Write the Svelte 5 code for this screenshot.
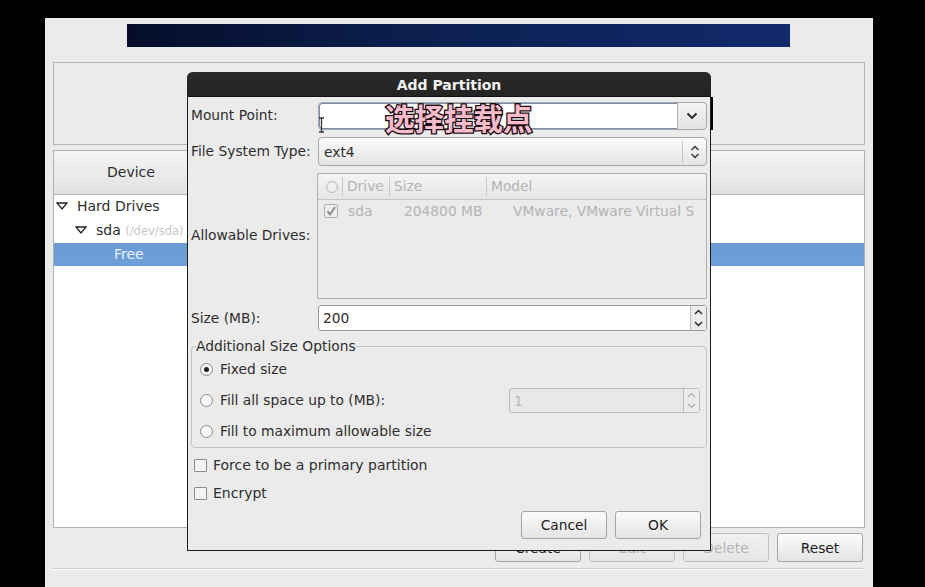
<script>
  const mainButtons = [
    { label: 'Create', disabled: false },
    { label: 'Edit', disabled: true },
    { label: 'Delete', disabled: true },
    { label: 'Reset', disabled: false }
  ];
  const sizeOptions = [
    { label: 'Fixed size', checked: true },
    { label: 'Fill all space up to (MB):', checked: false, spin: true },
    { label: 'Fill to maximum allowable size', checked: false }
  ];
</script>

<div class="screen">
  <div class="window">
    <div class="banner"></div>
    <div class="graph-panel"></div>

    <div class="tree-panel">
      <div class="tree-head"><span class="head-device">Device</span></div>
      <div class="tree-row level-0">
        <svg class="expander" width="12" height="8" viewBox="0 0 12 8"><path d="M1 1h10L6 7z" fill="#fff" stroke="#222" stroke-width="1.3"/></svg>
        <span>Hard Drives</span>
      </div>
      <div class="tree-row level-1">
        <svg class="expander" width="12" height="8" viewBox="0 0 12 8"><path d="M1 1h10L6 7z" fill="#fff" stroke="#222" stroke-width="1.3"/></svg>
        <span>sda <small>(/dev/sda)</small></span>
      </div>
      <div class="tree-row selected"><span>Free</span></div>
    </div>

    <div class="main-buttons">
      {#each mainButtons as b}
        <button class="btn" class:off={b.disabled}>{b.label}</button>
      {/each}
    </div>
    <div class="separator"></div>
  </div>

  <div class="dialog">
    <div class="titlebar">Add Partition</div>
    <div class="body">
      <div class="row mount">
        <span class="label">Mount Point:</span>
        <div class="combo-entry">
          <div class="entry-part"></div>
          <div class="arrow-part">
            <svg width="12" height="8" viewBox="0 0 12 8"><path d="M1.5 1.5 6 6l4.500-4.500" fill="none" stroke="#222" stroke-width="1.800"/></svg>
          </div>
        </div>
      </div>

      <div class="row fstype">
        <span class="label">File System Type:</span>
        <div class="combo">
          <span>ext4</span>
          <div class="updown">
            <svg width="10" height="14" viewBox="0 0 10 14"><path d="M1.500 5 5 1.500 8.500 5M1.500 9 5 12.500 8.500 9" fill="none" stroke="#333" stroke-width="1.400"/></svg>
          </div>
        </div>
      </div>

      <div class="row drives">
        <span class="label">Allowable Drives:</span>
        <div class="drive-list">
          <div class="drive-head">
            <span class="col-radio"><i></i></span>
            <span class="col-drive">Drive</span>
            <span class="col-size">Size</span>
            <span class="col-model">Model</span>
          </div>
          <div class="drive-row">
            <span class="drive-check">
              <svg width="12" height="12" viewBox="0 0 12 12"><path d="M2.500 6 5 9.500 10 2" fill="none" stroke="#888" stroke-width="1.800"/></svg>
            </span>
            <span class="cell-name">sda</span>
            <span class="cell-size">204800 MB</span>
            <span class="cell-model">VMware, VMware Virtual S</span>
          </div>
        </div>
      </div>

      <div class="row size">
        <span class="label size-label">Size (MB):</span>
        <div class="spin">
          <span class="spin-value">200</span>
          <div class="spin-btns">
            <svg width="9" height="6" viewBox="0 0 9 6"><path d="M1 5 4.500 1.500 8 5" fill="none" stroke="#222" stroke-width="1.400"/></svg>
            <svg width="9" height="6" viewBox="0 0 9 6"><path d="M1 1 4.500 4.500 8 1" fill="none" stroke="#222" stroke-width="1.400"/></svg>
          </div>
        </div>
      </div>

      <fieldset class="frame">
        <legend>Additional Size Options</legend>
        {#each sizeOptions as opt}
          <div class="option">
            <span class="radio" class:on={opt.checked}></span>
            <span class="option-text">{opt.label}</span>
            {#if opt.spin}
              <div class="spin small">
                <span class="spin-value">1</span>
                <div class="spin-btns">
                  <svg width="9" height="6" viewBox="0 0 9 6"><path d="M1 5 4.500 1.500 8 5" fill="none" stroke="#aaa" stroke-width="1.200"/></svg>
                  <svg width="9" height="6" viewBox="0 0 9 6"><path d="M1 1 4.500 4.500 8 1" fill="none" stroke="#aaa" stroke-width="1.200"/></svg>
                </div>
              </div>
            {/if}
          </div>
        {/each}
      </fieldset>

      <label class="check first"><span class="box"></span>Force to be a primary partition</label>
      <label class="check"><span class="box"></span>Encrypt</label>

      <div class="dialog-buttons">
        <button class="btn">Cancel</button>
        <button class="btn">OK</button>
      </div>
    </div>

    <div class="caption">选择挂载点</div>
    <svg class="ibeam" width="7" height="16" viewBox="0 0 7 16"><path d="M1 1h5M3.500 1v14M1 15h5" fill="none" stroke="#333" stroke-width="1.300"/></svg>
    <div class="dialog-shadow"></div>
  </div>
</div>

<style>
  :global(body) {
    margin: 0;
    background: #000;
  }

  .screen {
    position: relative;
    width: 925px;
    height: 587px;
    overflow: hidden;
    background: #000;
    font-family: "DejaVu Sans", sans-serif;
    font-size: 13.8px;
    color: #2e2e2e;
  }

  .window {
    box-sizing: border-box;
    width: 828px;
    height: 569px;
    margin: 18px 0 0 45px;
    padding: 6px 8px 0;
    background: #ebebeb;
    display: flex;
    flex-direction: column;
  }

  .banner {
    width: 663px;
    height: 23px;
    margin-left: 74px;
    background: linear-gradient(90deg, #050d2a 0%, #0c2050 45%, #12296c 100%);
  }

  .graph-panel {
    height: 81px;
    margin-top: 15px;
    border: 1px solid #b4b4b2;
  }

  .tree-panel {
    height: 376px;
    margin-top: 5px;
    border: 1px solid #b0b0ae;
    background: #fff;
  }

  .tree-head {
    height: 43px;
    display: flex;
    align-items: center;
    background: linear-gradient(#f4f4f4, #e2e2e2);
    border-bottom: 1px solid #b4b4b2;
  }

  .head-device {
    margin: 0 0 2px 53px;
    font-size: 14px;
  }

  .tree-row {
    box-sizing: border-box;
    height: 24px;
    padding-bottom: 2px;
    display: flex;
    align-items: center;
    gap: 9px;
    font-size: 14px;
  }

  .level-0 {
    padding-left: 2px;
  }

  .level-1 {
    padding-left: 21px;
  }

  .tree-row small {
    font-size: 11.500px;
    color: #c8c8c8;
  }

  .selected {
    height: 23px;
    padding-bottom: 1px;
    background: linear-gradient(#6a9cd6, #6f9fd8);
    color: #e8f0fa;
  }

  .selected span {
    margin-left: 60px;
  }

  .main-buttons {
    display: flex;
    gap: 8px;
    margin-top: 5px;
    padding-left: 442px;
  }

  .btn {
    box-sizing: border-box;
    width: 86px;
    height: 29px;
    padding: 0;
    border: 1px solid #a4a4a2;
    border-radius: 3px;
    background: linear-gradient(#fbfbfb, #e4e4e4);
    font: inherit;
    color: #1c1c1c;
  }

  .btn.off {
    color: #b4b4b4;
    background: linear-gradient(#f0f0f0, #e6e6e6);
    border-color: #c0c0c0;
  }

  .separator {
    margin-top: 6px;
    border-top: 1px solid #d0d0d0;
    border-bottom: 1px solid #fafafa;
  }

  .dialog {
    position: absolute;
    left: 187px;
    top: 72px;
    width: 524px;
    height: 479px;
    box-sizing: border-box;
    background: #ebebeb;
    border: 1px solid #1c1c1c;
    border-top: 0;
    border-radius: 6px 6px 0 0;
  }

  .titlebar {
    height: 24px;
    margin: 0 -1px;
    border-radius: 6px 6px 0 0;
    background: linear-gradient(#2a2a2a, #242422);
    border-bottom: 1px solid #111;
    color: #f2f2f2;
    font-weight: bold;
    font-size: 14px;
    line-height: 27px;
    text-align: center;
  }

  .body {
    padding: 5px 3px 0;
  }

  .row {
    display: grid;
    grid-template-columns: 127px 389px;
    align-items: center;
  }

  .label {
    white-space: nowrap;
    padding-bottom: 2px;
  }

  .size-label {
    padding-bottom: 0;
  }

  .combo-entry {
    display: flex;
    height: 28px;
    box-sizing: border-box;
    border: 1px solid #a8a8a6;
    border-radius: 4px;
    background: linear-gradient(#f4f4f4, #e4e4e4);
    overflow: hidden;
  }

  .entry-part {
    flex: 1;
    background: #fff;
    border: 1px solid #7d8fa6;
    border-right-color: #b0b0b0;
    border-radius: 3px 0 0 3px;
  }

  .arrow-part {
    width: 28px;
    display: flex;
    align-items: center;
    justify-content: center;
  }

  .fstype {
    margin-top: 7px;
  }

  .combo {
    display: flex;
    align-items: center;
    justify-content: space-between;
    height: 29px;
    box-sizing: border-box;
    padding-left: 5px;
    border: 1px solid #a8a8a6;
    border-radius: 4px;
    background: linear-gradient(#fbfbfb, #e4e4e4);
  }

  .updown {
    width: 23px;
    height: 22px;
    display: flex;
    align-items: center;
    justify-content: center;
    border-left: 1px solid #c4c4c4;
  }

  .drives {
    margin-top: 7px;
  }

  .drive-list {
    box-sizing: border-box;
    height: 126px;
    margin-left: -1px;
    border: 1px solid #b0b0ae;
    color: #b4b4b4;
  }

  .drive-head {
    height: 25px;
    display: flex;
    align-items: center;
    background: linear-gradient(#f4f4f4, #e6e6e6);
    border-bottom: 1px solid #c4c4c4;
  }

  .drive-head span {
    box-sizing: border-box;
    height: 19px;
    padding-left: 4px;
    line-height: 19px;
    border-right: 1px solid #c8c8c8;
  }

  .col-radio {
    width: 25px;
    display: flex;
    align-items: center;
    padding-left: 8px !important;
  }

  .col-radio i {
    width: 10px;
    height: 10px;
    border: 1px solid #b8b8b8;
    border-radius: 50%;
    background: #eee;
  }

  .col-drive {
    width: 47px;
  }

  .col-size {
    width: 97px;
  }

  .col-model {
    border-right: 0 !important;
  }

  .drive-row {
    box-sizing: border-box;
    height: 24px;
    padding-bottom: 2px;
    display: flex;
    align-items: center;
  }

  .drive-check {
    box-sizing: border-box;
    width: 14px;
    height: 14px;
    margin-left: 6px;
    border: 1px solid #b0b0b0;
    border-radius: 2px;
    background: #eee;
    display: flex;
  }

  .cell-name {
    margin-left: 10px;
    width: 56px;
  }

  .cell-size {
    width: 109px;
  }

  .cell-model {
    white-space: nowrap;
  }

  .size {
    margin-top: 6px;
  }

  .spin {
    display: flex;
    height: 26px;
    box-sizing: border-box;
    align-items: center;
    justify-content: space-between;
    border: 1px solid #9a9a98;
    border-radius: 3px;
    background: #fff;
  }

  .spin-value {
    padding-left: 4px;
  }

  .spin-btns {
    width: 15px;
    height: 100%;
    display: flex;
    flex-direction: column;
    align-items: center;
    justify-content: space-around;
    background: #ececec;
    border-left: 1px solid #bbb;
  }

  .frame {
    box-sizing: border-box;
    height: 110px;
    margin: 7px 0 0;
    padding: 0 6px 0 8px;
    width: 516px;
    border: 1px solid #c4c4c2;
    border-radius: 4px;
  }

  .frame legend {
    padding: 0;
    margin-left: -4px;
    line-height: 16px;
  }

  .option {
    height: 31px;
    display: flex;
    align-items: center;
    gap: 7px;
  }

  .option-text {
    padding-bottom: 2px;
  }

  .radio {
    box-sizing: border-box;
    width: 13px;
    height: 13px;
    border: 1px solid #8c8c8c;
    border-radius: 50%;
    background: #f6f6f6;
    display: flex;
    align-items: center;
    justify-content: center;
  }

  .radio.on::after {
    content: "";
    width: 5px;
    height: 5px;
    border-radius: 50%;
    background: #222;
  }

  .spin.small {
    margin-left: auto;
    width: 191px;
    height: 25px;
    border-color: #bcbcba;
    background: #e8e8e8;
    color: #b4b4b4;
    font-family: "DejaVu Sans Mono", monospace;
  }

  .check {
    display: flex;
    align-items: center;
    gap: 6px;
    height: 28px;
    padding-left: 3px;
    font-size: 14px;
  }

  .check.first {
    margin-top: 3px;
  }

  .box {
    box-sizing: border-box;
    width: 13px;
    height: 13px;
    border: 1px solid #8c8c8c;
    background: #f4f4f4;
    border-radius: 1px;
  }

  .dialog-buttons {
    display: flex;
    justify-content: flex-end;
    gap: 8px;
    margin-top: 4px;
    padding-right: 6px;
  }

  .dialog-buttons .btn {
    height: 28px;
  }

  .caption {
    position: absolute;
    left: 197px;
    top: 28px;
    font-family: "Noto Sans CJK SC", sans-serif;
    font-size: 29.500px;
    line-height: 34px;
    font-weight: 700;
    white-space: nowrap;
    color: #f7bccb;
    -webkit-text-stroke: 2.6px #1a0c12;
    paint-order: stroke fill;
  }

  .ibeam {
    position: absolute;
    left: 130px;
    top: 45px;
  }

  .dialog-shadow {
    position: absolute;
    left: 523px;
    top: 25px;
    width: 2px;
    height: 33px;
    background: #000;
  }
</style>
